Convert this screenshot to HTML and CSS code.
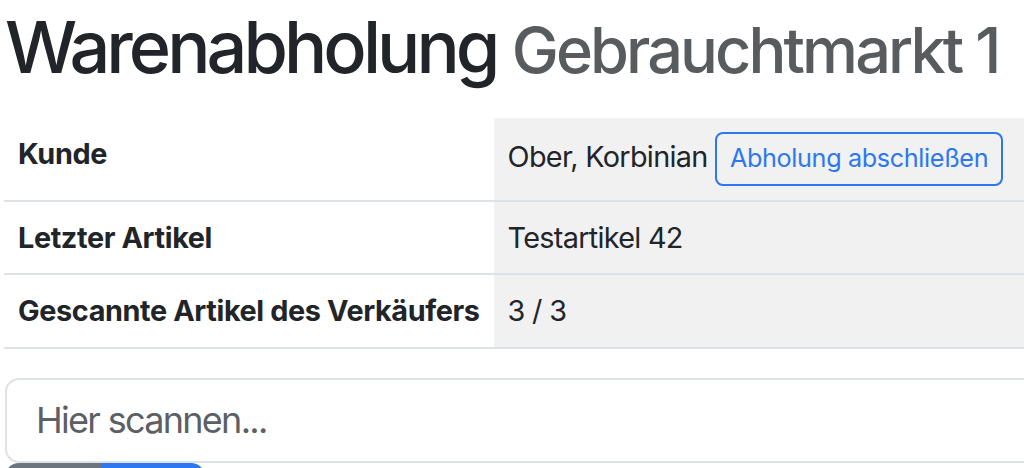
FILE: index.html
```html
<!DOCTYPE html>
<html lang="de">
<head>
    <meta charset="UTF-8">
    <meta name="viewport" content="width=device-width, initial-scale=1.0">
    <title>Warenabholung</title>
    <link rel="stylesheet" href="styles.css">
</head>
<body>
    <div class="page">
        <h1>Warenabholung <small>Gebrauchtmarkt 1</small></h1>

        <table class="info">
            <tbody>
                <tr>
                    <th>Kunde</th>
                    <td>Ober, Korbinian <button type="button" class="btn-finish">Abholung abschließen</button></td>
                </tr>
                <tr>
                    <th>Letzter Artikel</th>
                    <td>Testartikel 42</td>
                </tr>
                <tr>
                    <th>Gescannte Artikel des Verkäufers</th>
                    <td>3 / 3</td>
                </tr>
            </tbody>
        </table>

        <input type="text" class="scan" placeholder="Hier scannen..." autocomplete="off">

        <div class="actions">
            <button type="button" class="btn-back">Zurück</button>
            <button type="button" class="btn-next">Weiter</button>
        </div>
    </div>
</body>
</html>
```

FILE: styles.css
```css
body {
    margin: 0;
    font-family: Inter, "Noto Sans", sans-serif;
    color: #212529;
    background: #fff;
    overflow: hidden;
}

.page {
    width: 1240px;
    padding: 0 0 0 4px;
}

h1 {
    margin: 4px 0 28px 1px;
    font-size: 72px;
    font-weight: 500;
    line-height: 1.2;
    letter-spacing: -0.055em;
}

h1 small {
    font-size: 0.875em;
    color: #595c5f;
    letter-spacing: -0.046em;
}

.info {
    width: 100%;
    border-collapse: collapse;
    margin-bottom: 29px;
    font-size: 28.8px;
    line-height: 1.5;
}

.info th,
.info td {
    padding: 14px;
    border-bottom: 2px solid #dee2e6;
    text-align: left;
    vertical-align: top;
}

.info th {
    width: 1%;
    white-space: nowrap;
    font-weight: 700;
    letter-spacing: -0.37px;
}

.info td {
    background: #f1f1f1;
    letter-spacing: -0.7px;
}

.btn-finish {
    font-family: inherit;
    font-size: 25.2px;
    line-height: 1.5;
    letter-spacing: -0.35px;
    padding: 6px 13px;
    color: #2d78f0;
    background: transparent;
    border: 2px solid #2d78f0;
    border-radius: 8px;
    cursor: pointer;
}

.scan {
    display: block;
    box-sizing: border-box;
    width: 1230px;
    height: 85px;
    margin: 0 0 0 1px;
    padding: 0 29px;
    font-family: inherit;
    font-size: 36px;
    letter-spacing: -1.7px;
    color: #212529;
    border: 2px solid #dee2e6;
    border-radius: 14px;
}

.scan::placeholder {
    color: #5c5f63;
}

.actions {
    display: flex;
    margin-left: 1px;
}

.actions button {
    height: 86px;
    border: none;
    font-family: inherit;
    font-size: 28.8px;
    color: #fff;
}

.btn-back {
    width: 96px;
    background: #6c757d;
    border-radius: 14px 0 0 14px;
}

.btn-next {
    width: 104px;
    background: #2d78f0;
    border-radius: 0 14px 14px 0;
}
```
